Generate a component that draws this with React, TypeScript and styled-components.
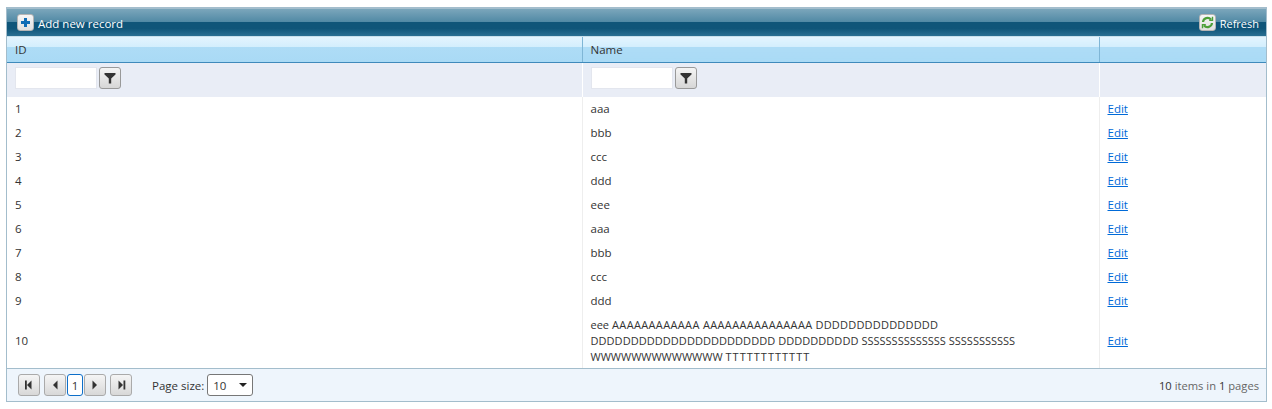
import type { ReactNode } from "react";
import { createGlobalStyle } from "styled-components";
import styled from "styled-components";

const GlobalStyle = createGlobalStyle`
  html, body {
    margin: 0;
    padding: 0;
    background: #fff;
  }
  body {
    font-family: "Open Sans", "Noto Sans", sans-serif;
    font-size: 11px;
    color: #333;
  }
`;

const Page = styled.div`
  padding: 7px 5px 0 6px;
`;

const Grid = styled.div`
  border: 1px solid #a3bdcc;
  border-top: 2px solid #a3bdcc;
  height: 395px;
  box-sizing: border-box;
  display: flex;
  flex-direction: column;
`;

const Toolbar = styled.div`
  height: 28px;
  flex: none;
  box-sizing: border-box;
  display: flex;
  align-items: center;
  justify-content: space-between;
  padding: 0 7px 0 10px;
  background: linear-gradient(#7ba6bb 0, #4f88a4 50%, #0f5579 50%, #0f5579 72%, #2a6f92 100%);
  border-bottom: 1px solid #c7dfeb;
`;

const ToolbarButton = styled.div`
  display: flex;
  align-items: center;
  gap: 4px;
  color: #fff;
`;

const ToolLabel = styled.span<{ $size: number }>`
  margin-top: 2px;
  font-size: ${(p) => p.$size}px;
`;

const ToolIcon = styled.span`
  width: 17px;
  height: 17px;
  box-sizing: border-box;
  display: flex;
  align-items: center;
  justify-content: center;
  border: 1px solid #b5b5b5;
  border-radius: 3px;
  background: linear-gradient(#f6f6f6, #e0e0e0);
`;

const Table = styled.table`
  width: 100%;
  flex: none;
  border-collapse: collapse;
  table-layout: fixed;
`;

const HeadCell = styled.th<{ $width?: number }>`
  width: ${(p) => (p.$width ? `${p.$width}px` : "auto")};
  height: 25px;
  padding: 0 8px;
  box-sizing: border-box;
  text-align: left;
  font-weight: 400;
  font-size: 11.5px;
  color: #333;
  background: linear-gradient(#e3f4fe 0, #d3eefd 40%, #aedcf6 40%, #a9daf5 100%);
  border-left: 1px solid #7fb6d6;
  border-bottom: 1px solid #3f8abb;
  &:first-child {
    border-left: 0;
  }
`;

const FilterCell = styled.td`
  height: 35px;
  padding: 4px 8px 0;
  vertical-align: top;
  box-sizing: border-box;
  background: #e9edf6;
  border-left: 1px solid #fff;
  &:first-child {
    border-left: 0;
  }
`;

const FilterWrap = styled.div`
  display: flex;
  align-items: flex-start;
  gap: 2px;
`;

const FilterInput = styled.div`
  width: 82px;
  height: 22px;
  box-sizing: border-box;
  background: #fff;
  border: 1px solid #e3e6ee;
`;

const FilterButton = styled.span`
  width: 22px;
  height: 22px;
  box-sizing: border-box;
  display: flex;
  align-items: center;
  justify-content: center;
  border: 1px solid #999;
  border-radius: 3px;
  background: linear-gradient(#f4f4f4, #d6d6d6);
`;

const Cell = styled.td<{ $tall?: boolean }>`
  height: ${(p) => (p.$tall ? 55 : 24)}px;
  padding: 0 8px;
  box-sizing: border-box;
  line-height: 16px;
  font-size: 11.5px;
  color: #333;
  border-left: 1px solid #eeeeee;
  overflow-wrap: break-word;
  &:first-child {
    border-left: 0;
  }
`;

const Chunk = styled.span<{ $track: number }>`
  font-size: 11px;
  letter-spacing: ${(p) => p.$track}px;
`;

const EditLink = styled.a`
  color: #006ad8;
  text-decoration: underline;
  font-size: 11.5px;
`;

const Pager = styled.div`
  flex: 1;
  display: flex;
  align-items: center;
  justify-content: space-between;
  padding: 0 7px 0 11px;
  background: #eef5fc;
  border-top: 1px solid #a3bdcc;
`;

const PagerLeft = styled.div`
  display: flex;
  align-items: center;
`;

const PageButton = styled.span<{ $gap?: number }>`
  width: 22px;
  height: 22px;
  box-sizing: border-box;
  margin-right: ${(p) => p.$gap ?? 0}px;
  display: flex;
  align-items: center;
  justify-content: center;
  border: 1px solid #aaa;
  border-radius: 3px;
  background: linear-gradient(#f5f5f5, #d8d8d8);
`;

const CurrentPage = styled.span`
  width: 16px;
  height: 22px;
  box-sizing: border-box;
  margin-right: 1px;
  display: flex;
  align-items: center;
  justify-content: center;
  border: 1px solid #0d6fc9;
  border-radius: 3px;
  background: #fff;
  font-size: 11.5px;
`;

const SizeLabel = styled.span`
  margin-left: 20px;
  margin-right: 3px;
  font-size: 11.5px;
`;

const SizeSelect = styled.div`
  width: 46px;
  height: 22px;
  box-sizing: border-box;
  display: flex;
  align-items: center;
  justify-content: space-between;
  padding: 0 5px;
  border: 1px solid #777;
  border-radius: 3px;
  background: #fff;
  font-size: 11.5px;
`;

const Arrow = styled.span`
  width: 0;
  height: 0;
  border-left: 4px solid transparent;
  border-right: 4px solid transparent;
  border-top: 4px solid #222;
`;

const PagerInfo = styled.span`
  color: #666;
  font-size: 11.2px;
  & b {
    font-weight: 400;
    color: #333;
  }
`;

const FunnelIcon = () => (
  <svg width="14" height="14" viewBox="0 0 14 14">
    <path d="M1.5 2h11v1.6L8.2 7.5V12.5H5.8V7.5L1.5 3.6z" fill="#333" />
  </svg>
);

const PlusIcon = () => (
  <svg width="11" height="11" viewBox="0 0 11 11">
    <path d="M4 1h3v3h3v3H7v3H4V7H1V4h3z" fill="#0f6cb5" />
  </svg>
);

const RefreshIcon = () => (
  <svg width="13" height="13" viewBox="0 0 13 13" fill="none" stroke="#4c9f38" strokeWidth="2.2">
    <path d="M2 6a4.6 4.6 0 0 1 8-2.6" />
    <path d="M11 7a4.6 4.6 0 0 1-8 2.6" />
    <path d="M11.5 0.8v3.4H8.2" strokeWidth="1.4" />
    <path d="M1.5 12.2V8.8h3.3" strokeWidth="1.4" />
  </svg>
);

const Triangle = ({ dir, bar }: { dir: "left" | "right"; bar?: boolean }) => (
  <svg width="10" height="12" viewBox="0 0 10 12" fill="#333">
    {dir === "left" ? <path d="M7.5 1.5v9L3 6z" /> : <path d="M2.5 1.5v9L7 6z" />}
    {bar && <rect x={dir === "left" ? 1 : 7.5} y="1.5" width="1.8" height="9" />}
  </svg>
);

// the last record is long, its letters need a bit of tracking to wrap like the original
const longName: ReactNode = (
  <>
    <Chunk $track={0}>eee</Chunk> <Chunk $track={0.35}>AAAAAAAAAAAA AAAAAAAAAAAAAAA</Chunk>{" "}
    <Chunk $track={0.2}>DDDDDDDDDDDDDDD</Chunk> <Chunk $track={0.05}>DDDDDDDDDDDDDDDDDDDDDDD DDDDDDDDDD</Chunk>{" "}
    <Chunk $track={0}>SSSSSSSSSSSSSS SSSSSSSSSSS</Chunk> <Chunk $track={0}>WWWWWWWWWWWWW</Chunk>{" "}
    <Chunk $track={1}>TTTTTTTTTTTT</Chunk>
  </>
);

const rows: { id: number; name: ReactNode }[] = [
  { id: 1, name: "aaa" },
  { id: 2, name: "bbb" },
  { id: 3, name: "ccc" },
  { id: 4, name: "ddd" },
  { id: 5, name: "eee" },
  { id: 6, name: "aaa" },
  { id: 7, name: "bbb" },
  { id: 8, name: "ccc" },
  { id: 9, name: "ddd" },
  { id: 10, name: longName },
];

const Filter = () => (
  <FilterWrap>
    <FilterInput />
    <FilterButton>
      <FunnelIcon />
    </FilterButton>
  </FilterWrap>
);

export default function App() {
  return (
    <Page>
      <GlobalStyle />
      <Grid>
        <Toolbar>
          <ToolbarButton>
            <ToolIcon>
              <PlusIcon />
            </ToolIcon>
            <ToolLabel $size={11.5}>Add new record</ToolLabel>
          </ToolbarButton>
          <ToolbarButton>
            <ToolIcon>
              <RefreshIcon />
            </ToolIcon>
            <ToolLabel $size={11}>Refresh</ToolLabel>
          </ToolbarButton>
        </Toolbar>
        <Table>
          <thead>
            <tr>
              <HeadCell $width={575}>ID</HeadCell>
              <HeadCell $width={517}>Name</HeadCell>
              <HeadCell />
            </tr>
            <tr>
              <FilterCell>
                <Filter />
              </FilterCell>
              <FilterCell>
                <Filter />
              </FilterCell>
              <FilterCell />
            </tr>
          </thead>
          <tbody>
            {rows.map((row) => (
              <tr key={row.id}>
                <Cell $tall={row.id === 10}>{row.id}</Cell>
                <Cell>{row.name}</Cell>
                <Cell>
                  <EditLink href="#">Edit</EditLink>
                </Cell>
              </tr>
            ))}
          </tbody>
        </Table>
        <Pager>
          <PagerLeft>
            <PageButton $gap={4}>
              <Triangle dir="left" bar />
            </PageButton>
            <PageButton $gap={1}>
              <Triangle dir="left" />
            </PageButton>
            <CurrentPage>1</CurrentPage>
            <PageButton $gap={4}>
              <Triangle dir="right" />
            </PageButton>
            <PageButton>
              <Triangle dir="right" bar />
            </PageButton>
            <SizeLabel>Page size:</SizeLabel>
            <SizeSelect>
              10
              <Arrow />
            </SizeSelect>
          </PagerLeft>
          <PagerInfo>
            <b>10</b> items in <b>1</b> pages
          </PagerInfo>
        </Pager>
      </Grid>
    </Page>
  );
}
